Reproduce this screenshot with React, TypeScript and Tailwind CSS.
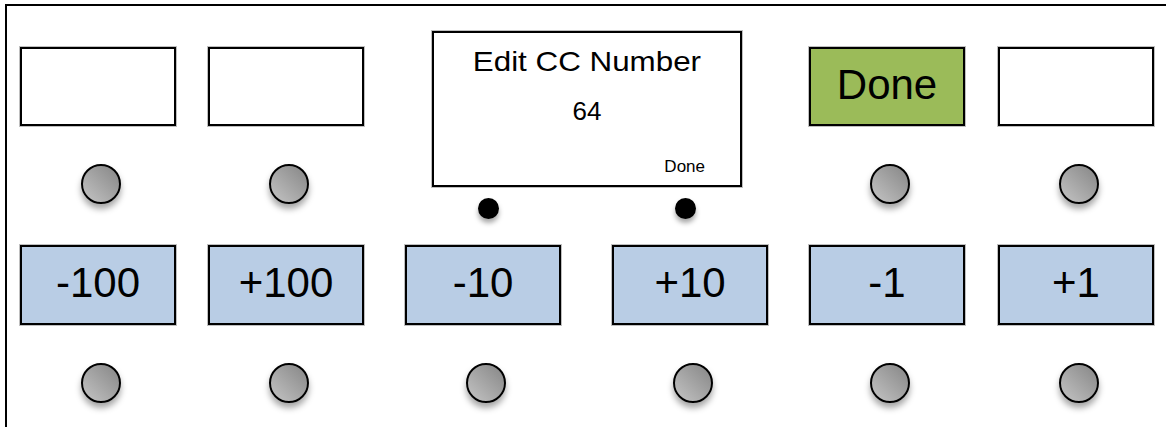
import React from "react";

const FONT = "font-['Liberation_Sans',Arial,sans-serif]";

function Knob() {
  return (
    <div className="ml-[61px] mt-[38px] h-[40px] w-[40px] rounded-full border-2 border-black bg-linear-to-tr from-[#c4c4c4] to-[#868686] shadow-[0_5px_6px_rgba(0,0,0,0.35)]" />
  );
}

function Dot({ className }: { className: string }) {
  return (
    <div
      className={`h-[21px] w-[21px] rounded-full bg-black shadow-[0_4px_5px_rgba(0,0,0,0.35)] ${className}`}
    />
  );
}

function TopCol({ ml, children, green }: { ml: string; children?: React.ReactNode; green?: boolean }) {
  return (
    <div className={`mt-[16px] flex w-[156px] flex-col ${ml}`}>
      <div
        className={`flex h-[79px] w-[156px] items-center justify-center border-2 border-black pb-[4px] text-[42px] leading-none text-black shadow-[0_0_0_1px_rgba(0,0,0,0.25)] ${
          green ? "bg-[#9bbb59]" : "bg-white"
        }`}
      >
        {children}
      </div>
      <Knob />
    </div>
  );
}

function BottomCol({ ml, label }: { ml: string; label: string }) {
  return (
    <div className={`flex w-[156px] flex-col ${ml}`}>
      <div className="flex h-[80px] w-[156px] items-center justify-center border-2 border-black bg-[#b9cde5] pb-[4px] text-[42px] leading-none text-black shadow-[0_0_0_1px_rgba(0,0,0,0.25)]">
        {label}
      </div>
      <Knob />
    </div>
  );
}

export default function App() {
  return (
    <div className={`h-[427px] w-[1166px] overflow-hidden bg-white pl-[5px] pt-[4px] ${FONT}`}>
      <div className="h-[440px] w-[1200px] border-l-2 border-t-2 border-black">
        {/* top section */}
        <div className="flex items-start pt-[25px]">
          <TopCol ml="ml-[13px]" />
          <TopCol ml="ml-[32px]" />
          <div className="ml-[68px] flex w-[310px] flex-col">
            <div className="flex h-[156px] w-[310px] flex-col border-2 border-black bg-white pt-[15px] text-black shadow-[0_0_0_1px_rgba(0,0,0,0.25)]">
              <div className="flex justify-center">
                <span className="inline-block scale-x-[1.12] text-[28px] leading-none">Edit CC Number</span>
              </div>
              <div className="mt-[22px] flex justify-center">
                <span className="text-[26px] leading-none">64</span>
              </div>
              <div className="mt-[34px] flex justify-end pr-[35px]">
                <span className="text-[17px] leading-none">Done</span>
              </div>
            </div>
            <div className="mt-[11px] flex">
              <Dot className="ml-[46px]" />
              <Dot className="ml-[176px]" />
            </div>
          </div>
          <TopCol ml="ml-[67px]" green>
            Done
          </TopCol>
          <TopCol ml="ml-[33px]" />
        </div>
        {/* bottom section */}
        <div className="mt-[26px] flex items-start">
          <BottomCol ml="ml-[13px]" label="-100" />
          <BottomCol ml="ml-[32px]" label="+100" />
          <BottomCol ml="ml-[41px]" label="-10" />
          <BottomCol ml="ml-[51px]" label="+10" />
          <BottomCol ml="ml-[41px]" label="-1" />
          <BottomCol ml="ml-[33px]" label="+1" />
        </div>
      </div>
    </div>
  );
}
